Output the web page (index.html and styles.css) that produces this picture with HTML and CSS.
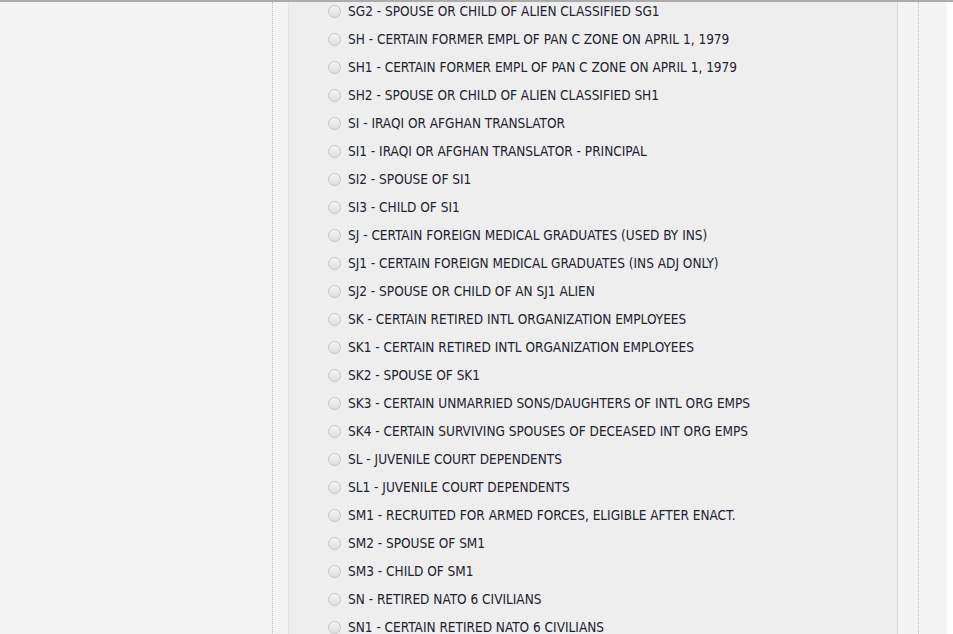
FILE: index.html
```html
<!DOCTYPE html>
<html lang="en">

<head>
    <meta charset="utf-8">
    <title>Klasser</title>
    <link rel="stylesheet" href="styles.css">
</head>

<body>
    <div class="side">
        <div class="venstre"></div>
        <div class="midte">
            <section class="panel">
                <label class="valg"><input type="radio" name="klasse"><span>SG2 - SPOUSE OR CHILD OF ALIEN CLASSIFIED SG1</span></label>
                <label class="valg"><input type="radio" name="klasse"><span>SH - CERTAIN FORMER EMPL OF PAN C ZONE ON APRIL 1, 1979</span></label>
                <label class="valg"><input type="radio" name="klasse"><span>SH1 - CERTAIN FORMER EMPL OF PAN C ZONE ON APRIL 1, 1979</span></label>
                <label class="valg"><input type="radio" name="klasse"><span>SH2 - SPOUSE OR CHILD OF ALIEN CLASSIFIED SH1</span></label>
                <label class="valg"><input type="radio" name="klasse"><span>SI - IRAQI OR AFGHAN TRANSLATOR</span></label>
                <label class="valg"><input type="radio" name="klasse"><span>SI1 - IRAQI OR AFGHAN TRANSLATOR - PRINCIPAL</span></label>
                <label class="valg"><input type="radio" name="klasse"><span>SI2 - SPOUSE OF SI1</span></label>
                <label class="valg"><input type="radio" name="klasse"><span>SI3 - CHILD OF SI1</span></label>
                <label class="valg"><input type="radio" name="klasse"><span>SJ - CERTAIN FOREIGN MEDICAL GRADUATES (USED BY INS)</span></label>
                <label class="valg"><input type="radio" name="klasse"><span>SJ1 - CERTAIN FOREIGN MEDICAL GRADUATES (INS ADJ ONLY)</span></label>
                <label class="valg"><input type="radio" name="klasse"><span>SJ2 - SPOUSE OR CHILD OF AN SJ1 ALIEN</span></label>
                <label class="valg"><input type="radio" name="klasse"><span>SK - CERTAIN RETIRED INTL ORGANIZATION EMPLOYEES</span></label>
                <label class="valg"><input type="radio" name="klasse"><span>SK1 - CERTAIN RETIRED INTL ORGANIZATION EMPLOYEES</span></label>
                <label class="valg"><input type="radio" name="klasse"><span>SK2 - SPOUSE OF SK1</span></label>
                <label class="valg"><input type="radio" name="klasse"><span>SK3 - CERTAIN UNMARRIED SONS/DAUGHTERS OF INTL ORG EMPS</span></label>
                <label class="valg"><input type="radio" name="klasse"><span>SK4 - CERTAIN SURVIVING SPOUSES OF DECEASED INT ORG EMPS</span></label>
                <label class="valg"><input type="radio" name="klasse"><span>SL - JUVENILE COURT DEPENDENTS</span></label>
                <label class="valg"><input type="radio" name="klasse"><span>SL1 - JUVENILE COURT DEPENDENTS</span></label>
                <label class="valg"><input type="radio" name="klasse"><span>SM1 - RECRUITED FOR ARMED FORCES, ELIGIBLE AFTER ENACT.</span></label>
                <label class="valg"><input type="radio" name="klasse"><span>SM2 - SPOUSE OF SM1</span></label>
                <label class="valg"><input type="radio" name="klasse"><span>SM3 - CHILD OF SM1</span></label>
                <label class="valg"><input type="radio" name="klasse"><span>SN - RETIRED NATO 6 CIVILIANS</span></label>
                <label class="valg"><input type="radio" name="klasse"><span>SN1 - CERTAIN RETIRED NATO 6 CIVILIANS</span></label>
            </section>
        </div>
        <div class="hoejre"></div>
    </div>
</body>

</html>
```

FILE: styles.css
```css
html,
body {
    margin: 0;
    height: 100%;
    overflow: hidden;
}

body {
    background-color: white;
    border-top: 2px solid #acacac;
    box-sizing: border-box;
}

.side {
    display: flex;
    width: 947px;
    height: 100%;
    background-color: #f4f4f4;
}

.venstre {
    width: 272px;
}

.midte {
    width: 630px;
    border-left: 1px dotted #bdbdbd;
    border-right: 1px dotted #bdbdbd;
    padding-left: 15px;
}

.hoejre {
    flex: 1;
}

.panel {
    width: 610px;
    height: 100%;
    background-color: #eeeeee;
    border-left: 1px solid #e4e4e4;
    border-right: 1px solid #dcdcdc;
    padding-left: 39px;
    box-sizing: border-box;
}

.valg {
    display: flex;
    align-items: center;
    height: 18px;
    margin-bottom: 10px;
    font-family: "DejaVu Sans Condensed", "DejaVu Sans", sans-serif;
    font-size: 13.5px;
    color: #22222e;
    cursor: pointer;
}

.valg input {
    appearance: none;
    width: 13px;
    height: 13px;
    margin: 0 7px 0 0;
    border: 1px solid #c4c4c4;
    border-radius: 50%;
    background: linear-gradient(#f4f4f4, #dedede);
    box-sizing: border-box;
}
```
